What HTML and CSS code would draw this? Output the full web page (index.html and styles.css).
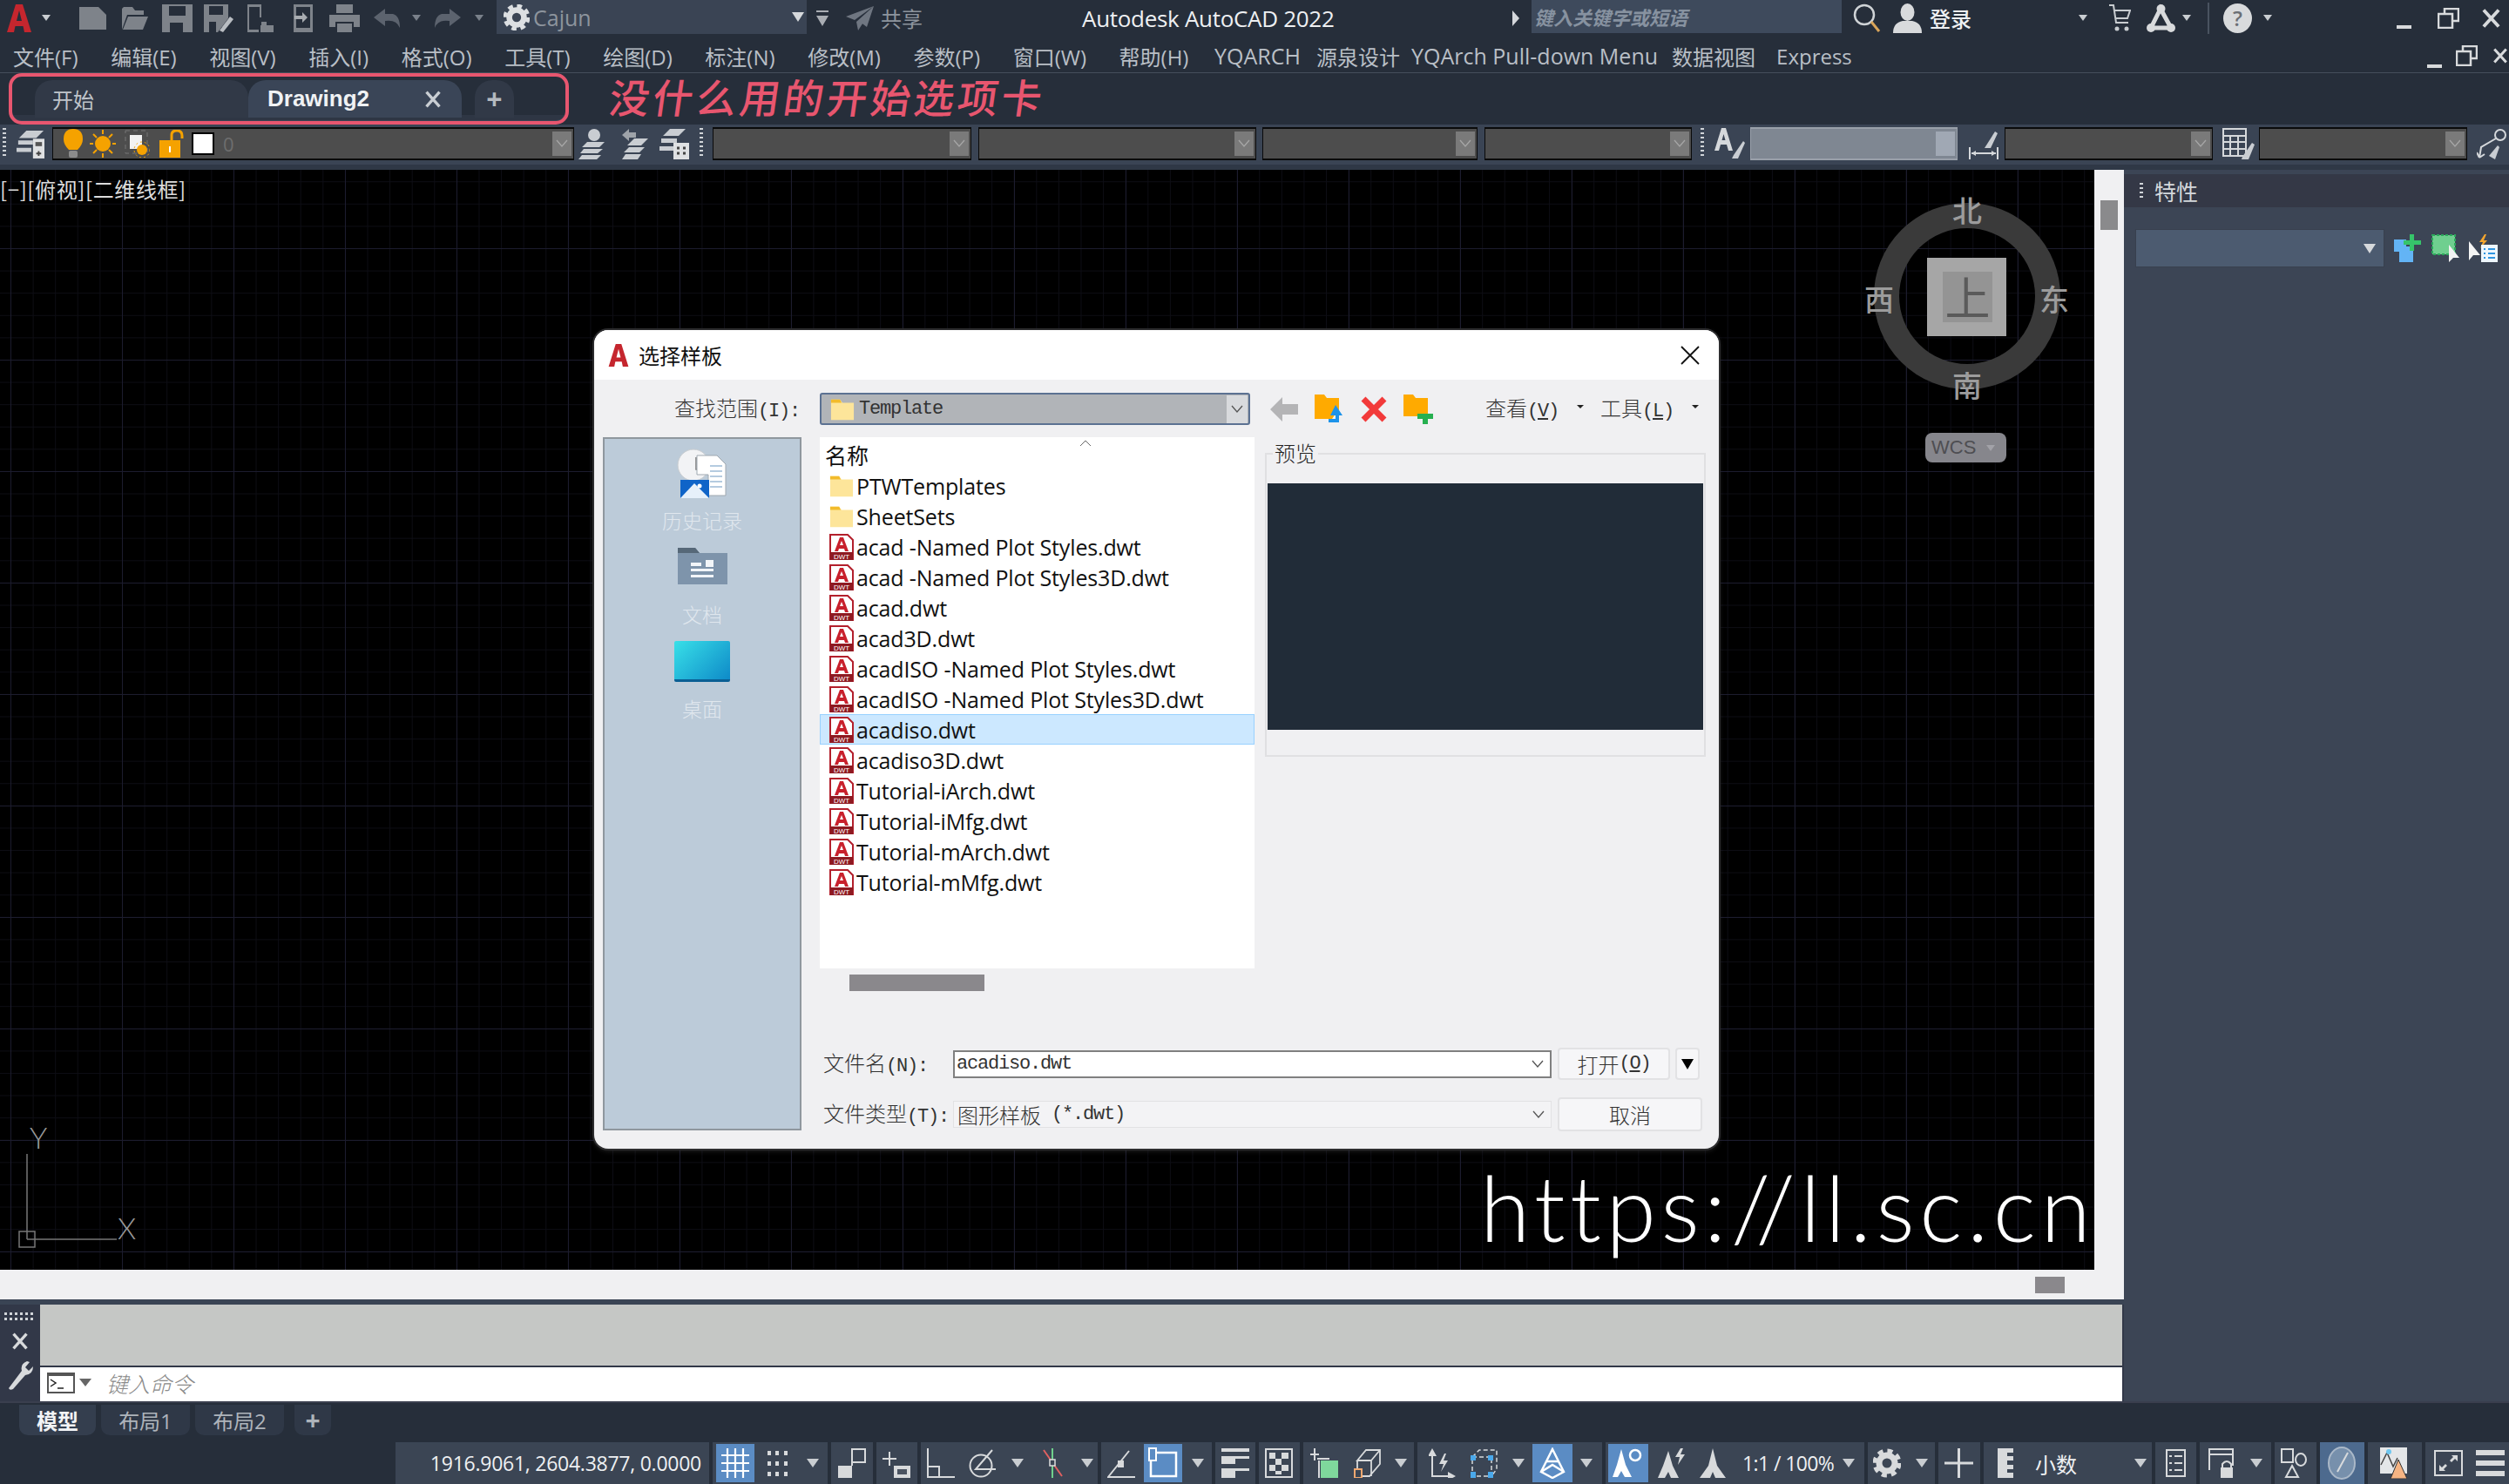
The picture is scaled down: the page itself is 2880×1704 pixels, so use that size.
FILE: index.html
```html
<!DOCTYPE html>
<html lang="zh">
<head>
<meta charset="utf-8">
<title>Autodesk AutoCAD 2022</title>
<link rel="stylesheet" href="styles.css">
</head>
<body>
<svg class="sprite" width="0" height="0">
  <symbol id="dwt" viewBox="0 0 28 30">
    <path d="M1 1H21L27 7V29H1Z" fill="#fff" stroke="#b3202c" stroke-width="2"/>
    <path d="M6 20L12 4H16L22 20H18L17 17H11L10 20ZM12 13H16L14 8Z" fill="#c8202c" fill-rule="evenodd"/>
    <rect x="1" y="21" width="26" height="9" fill="#8e1a22"/>
    <text x="14" y="29" font-size="8" fill="#fff" text-anchor="middle" font-family="Liberation Sans">DWT</text>
  </symbol>
  <symbol id="folder" viewBox="0 0 30 30">
    <path d="M1 3H12L15 7H29V28H1Z" fill="#fde59a"/>
    <path d="M1 3H12L14 7H1Z" fill="#f2bb2b"/>
  </symbol>
  <symbol id="gear" viewBox="0 0 32 32">
    <circle cx="16" cy="16" r="9" fill="none" stroke="currentColor" stroke-width="7"/>
    <circle cx="16" cy="16" r="14" fill="none" stroke="currentColor" stroke-width="5" stroke-dasharray="6 5"/>
  </symbol>
  <symbol id="chev" viewBox="0 0 14 10"><path d="M1 1L7 8L13 1" fill="none" stroke="currentColor" stroke-width="1.3"/></symbol>
  <symbol id="x" viewBox="0 0 24 24"><path d="M3 2L21 22M21 2L3 22" fill="none" stroke="currentColor" stroke-width="4"/></symbol>
</svg>

<div class="app">
  <header class="titlebar">
    <svg class="logo" width="28" height="32" viewBox="0 0 28 32"><path d="M0 32L10 0H18L28 32H20L18.5 25H9.5L8 32ZM11 19H17L14 7Z" fill="#c5262e" fill-rule="evenodd"/></svg>
    <i class="arr arr-s ml12"></i>
    <svg class="qa ml31" width="35" height="26" viewBox="0 0 35 26"><path d="M2 0H24L33 9V26H2Z" fill="#7e838a"/></svg>
    <svg class="qa ml14" width="32" height="26" viewBox="0 0 32 26"><path d="M4 0H14L17 4H27V9H8L2 26V2ZM9 11H32L26 26H3Z" fill="#7e838a"/></svg>
    <svg class="qa ml16" width="35" height="32" viewBox="0 0 35 32"><path d="M0 0H35V32H0ZM8 2V13H27V2ZM9 21V32H24V21Z" fill="#7e838a" fill-rule="evenodd"/></svg>
    <svg class="qa ml13" width="34" height="32" viewBox="0 0 34 32"><path d="M0 0H28V16L16 32H0ZM6 2V12H22V2ZM6 20V32H14V20Z" fill="#7e838a" fill-rule="evenodd"/><path d="M18 30L30 14L34 17L22 32Z" fill="#b9bdc2"/></svg>
    <svg class="qa ml15" width="31" height="32" viewBox="0 0 31 32"><path d="M1 0H17V15H15V3H3V29H14V32H1Z" fill="#7e838a"/><path d="M16 24H31V32H16ZM17 20H23V24H17Z" fill="#7e838a"/></svg>
    <svg class="qa ml22" width="24" height="32" viewBox="0 0 24 32"><path d="M1 0H23V32H1ZM4 3V27H20V3Z" fill="#7e838a" fill-rule="evenodd"/><path d="M2 13H11V9L17 15L11 21V17H2Z" fill="#a8acb1"/></svg>
    <svg class="qa ml18" width="35" height="32" viewBox="0 0 35 32"><path d="M8 0H27V10H8ZM0 12H35V26H28V20H7V26H0ZM9 22H26V32H9Z" fill="#7e838a"/></svg>
    <svg class="qa ml16" width="30" height="22" viewBox="0 0 30 22"><path d="M0 10L13 0V6H22Q30 8 30 22Q26 12 13 14V20Z" fill="#5c636e"/></svg>
    <i class="arr arr-s ml14 dim"></i>
    <svg class="qa ml16" width="30" height="22" viewBox="0 0 30 22"><path d="M30 10L17 0V6H8Q0 8 0 22Q4 12 17 14V20Z" fill="#5c636e"/></svg>
    <i class="arr arr-s ml16 dim"></i>
    <div class="workspace">
      <svg class="gear-ic" width="30" height="30"><use href="#gear"/></svg>
      <span class="ws-name">Cajun</span>
      <i class="arr arr-w"></i>
    </div>
    <svg class="ml10" width="16" height="22" viewBox="0 0 16 22"><path d="M1 2H15V4H1ZM1 8H15L8 20Z" fill="#a9adb3"/></svg>
    <svg class="ml19" width="32" height="28" viewBox="0 0 32 28"><path d="M32 0L0 12L10 16ZM32 0L12 18L14 28ZM32 0L16 18L24 24Z" fill="#6f7681"/></svg>
    <span class="share">共享</span>
    <span class="app-title">Autodesk AutoCAD 2022</span>
    <svg class="tri-r" width="8" height="18" viewBox="0 0 8 18"><path d="M0 0L8 9L0 18Z" fill="#d5d8dc"/></svg>
    <div class="search"><span>键入关键字或短语</span></div>
    <svg class="ml13" width="32" height="34" viewBox="0 0 32 34"><circle cx="13" cy="13" r="11" fill="none" stroke="#cfd3d6" stroke-width="2.5"/><path d="M21 21L30 32" stroke="#d9a55a" stroke-width="3"/></svg>
    <svg class="ml14" width="33" height="34" viewBox="0 0 33 34"><ellipse cx="16.500" cy="10" rx="8" ry="10" fill="#d8dadc"/><path d="M0 34Q0 22 11 20H22Q33 22 33 34Z" fill="#d8dadc"/></svg>
    <span class="login">登录</span>
    <i class="arr arr-s right-a"></i>
    <svg class="ml24" width="26" height="34" viewBox="0 0 26 34"><path d="M1 2H6L9 22H23M7 8H25L22 17H8" fill="none" stroke="#c8ccd0" stroke-width="2"/><circle cx="10" cy="29" r="2.500" fill="#c8ccd0"/><circle cx="21" cy="29" r="2.500" fill="#c8ccd0"/></svg>
    <svg class="ml18" width="33" height="34" viewBox="0 0 33 34"><circle cx="16.500" cy="6" r="5" fill="#d8dadc"/><circle cx="5" cy="28" r="5" fill="#d8dadc"/><circle cx="28" cy="28" r="5" fill="#d8dadc"/><path d="M16 6L5 28H28Z" fill="none" stroke="#d8dadc" stroke-width="5"/></svg>
    <i class="arr arr-s ml8"></i>
    <span class="vsep"></span>
    <span class="help">?</span>
    <i class="arr arr-s ml13"></i>
    <span class="win-min ml143"></span>
    <svg class="ml30" width="25" height="24" viewBox="0 0 25 24"><path d="M8 6V1H24V15H17M1 7H17V23H1Z" fill="none" stroke="#d8dadc" stroke-width="2.500"/></svg>
    <svg class="close-ic ml25" width="23" height="26"><use href="#x"/></svg>
  </header>

  <nav class="menubar">
    <span>文件(F)</span><span>编辑(E)</span><span>视图(V)</span><span>插入(I)</span><span>格式(O)</span><span>工具(T)</span><span>绘图(D)</span><span>标注(N)</span><span>修改(M)</span><span>参数(P)</span><span>窗口(W)</span><span>帮助(H)</span>
    <div class="menu-ext">
      <span class="m-a">YQARCH</span><span class="m-b">源泉设计</span><span class="m-c">YQArch Pull-down Menu</span><span class="m-d">数据视图</span><span class="m-e">Express</span>
    </div>
    <span class="win-min m-ctl"></span>
    <svg class="m-res" width="25" height="24" viewBox="0 0 25 24"><path d="M8 6V1H24V15H17M1 7H17V23H1Z" fill="none" stroke="#d8dadc" stroke-width="2.500"/></svg>
    <svg class="close-ic m-res" width="18" height="24"><use href="#x"/></svg>
  </nav>

  <div class="tabstrip">
    <div class="tabbox">
      <div class="tab tab-start">开始</div>
      <div class="tab tab-active"><span>Drawing2</span><svg class="tab-x" width="20" height="20"><use href="#x"/></svg></div>
      <div class="tab tab-plus">+</div>
    </div>
    <div class="note">没什么用的开始选项卡</div>
  </div>

  <div class="toolbar">
    <i class="grip ml3"></i>
    <svg class="ml12" width="32" height="36" viewBox="0 0 34 36"><path d="M12 2H33L24 11H3ZM2 14H20V19H2ZM0 23H18V28H0Z" fill="#c9cdd2"/><rect x="20" y="12" width="14" height="24" fill="#dfe1e3"/><rect x="23" y="16" width="8" height="5" fill="#555"/><path d="M24 30H30M27 27V33" stroke="#444" stroke-width="2"/></svg>
    <div class="combo c-layer">
      <svg class="ml12" width="22" height="34" viewBox="0 0 22 34"><path d="M11 0Q22 0 22 12Q22 18 16 24H6Q0 18 0 12Q0 0 11 0Z" fill="#f5a200"/><rect x="6" y="25" width="10" height="8" rx="2" fill="#8b8b8b"/></svg>
      <svg class="ml8" width="30" height="32" viewBox="0 0 30 32"><circle cx="15" cy="16" r="9" fill="#f5a200"/><path d="M15 0V5M15 27V32M0 16H4M26 16H30M4 5L8 9M22 23L26 27M26 5L22 9M8 23L4 27" stroke="#f5a200" stroke-width="2"/></svg>
      <svg class="ml10" width="29" height="32" viewBox="0 0 29 32"><rect x="1" y="1" width="25" height="26" fill="none" stroke="#777" stroke-dasharray="5 4"/><rect x="6" y="6" width="14" height="16" fill="#f2f2f2"/><circle cx="20" cy="23" r="6" fill="#f5a200"/><circle cx="20" cy="23" r="9" fill="none" stroke="#f5a200" stroke-dasharray="2 3"/></svg>
      <svg class="ml11" width="28" height="32" viewBox="0 0 28 32"><path d="M14 12V6Q14 1 20 1Q26 1 26 7V10" fill="none" stroke="#f5a200" stroke-width="3"/><rect x="0" y="12" width="24" height="20" fill="#f5a200"/><rect x="11" y="19" width="2" height="7" fill="#fff"/></svg>
      <span class="swatch"></span>
      <span class="layer-zero">0</span>
      <span class="combo-btn"><svg width="14" height="10"><use href="#chev"/></svg></span>
    </div>
    <svg class="ml5" width="35" height="36" viewBox="0 0 35 36"><circle cx="18" cy="8" r="7" fill="#c9cdd2"/><path d="M10 16H30L24 22H4ZM6 24H28L22 29H2ZM4 31H26L21 36H0Z" fill="#c9cdd2"/></svg>
    <svg class="ml15" width="30" height="36" viewBox="0 0 30 36"><path d="M0 8L8 1V5H16V11H8V15Z" fill="#9ea3a9"/><path d="M14 12H30L22 20H6ZM8 22H26L20 28H2ZM4 30H22L18 36H0Z" fill="#c9cdd2"/></svg>
    <svg class="ml13" width="34" height="36" viewBox="0 0 34 36"><path d="M12 1H30L22 9H4ZM2 12H20V17H2ZM0 21H16V26H0Z" fill="#c9cdd2"/><rect x="16" y="17" width="18" height="19" fill="#dfe1e3"/><path d="M20 23H23M27 23H30M20 29H23M27 29H30" stroke="#444" stroke-width="3"/></svg>
    <i class="grip ml12"></i>
    <div class="combo c2"><span class="combo-btn"><svg width="14" height="10"><use href="#chev"/></svg></span></div>
    <div class="combo c3"><span class="combo-btn"><svg width="14" height="10"><use href="#chev"/></svg></span></div>
    <div class="combo c4"><span class="combo-btn"><svg width="14" height="10"><use href="#chev"/></svg></span></div>
    <div class="combo c5"><span class="combo-btn"><svg width="14" height="10"><use href="#chev"/></svg></span></div>
    <i class="grip ml10"></i>
    <svg class="ml12" width="35" height="36" viewBox="0 0 35 36"><path d="M0 26L8 0H13L21 26H16L14 19H7L5 26ZM8.500 14H12.500L10.500 7Z" fill="#d5d8db" fill-rule="evenodd"/><path d="M22 31L33 15L35 17L27 35H20Z" fill="#c9cdd2"/></svg>
    <div class="combo c6"><span class="combo-btn light"></span></div>
    <svg class="ml13" width="35" height="36" viewBox="0 0 35 36"><path d="M1 22V36M33 22V36M3 29H31" stroke="#d5d8db" stroke-width="2" fill="none"/><path d="M3 29L8 26V32ZM31 29L26 26V32Z" fill="#d5d8db"/><path d="M18 23L30 4L33 6L25 23Z" fill="#c9cdd2"/></svg>
    <div class="combo c7 ml6"><span class="combo-btn"><svg width="14" height="10"><use href="#chev"/></svg></span></div>
    <svg class="ml11" width="37" height="36" viewBox="0 0 37 36"><path d="M1 1H27V32H1ZM1 9H27M1 16H27M1 24H27M9 9V32M18 9V32" fill="none" stroke="#d5d8db" stroke-width="2"/><path d="M23 33L34 17L37 19L30 36H22Z" fill="#c9cdd2"/></svg>
    <div class="combo c8 ml5"><span class="combo-btn"><svg width="14" height="10"><use href="#chev"/></svg></span></div>
    <svg class="ml11" width="35" height="36" viewBox="0 0 35 36"><circle cx="27" cy="8" r="6" fill="none" stroke="#d5d8db" stroke-width="2"/><path d="M22 12L5 22L3 34M3 34L0 28M3 34L9 30" fill="none" stroke="#d5d8db" stroke-width="2"/><path d="M14 32L24 20L26 22L21 36Z" fill="#c9cdd2"/></svg>
  </div>

  <div class="main">
    <div class="workarea">
      <div class="viewrow">
        <div class="canvas">
          <div class="viewlabel">[&#8722;][俯视][二维线框]</div>

          <div class="viewcube">
            <div class="vc-ring"></div>
            <span class="vc-dir vc-n">北</span><span class="vc-dir vc-s">南</span><span class="vc-dir vc-w">西</span><span class="vc-dir vc-e">东</span>
            <div class="vc-face"><div class="vc-inner">上</div></div>
            <div class="vc-wcs">WCS<i class="arr arr-s wcs-a"></i></div>
          </div>

          <div class="ucs">
            <svg width="150" height="135" viewBox="0 0 150 135"><path d="M31 24V122M31 122H134M22 113H40V131H22Z" fill="none" stroke="#777" stroke-width="1.500"/></svg>
            <span class="ucs-y">Y</span><span class="ucs-x">X</span>
          </div>

          <div class="watermark">https://ll.sc.cn</div>

          <section class="dialog">
            <div class="dlg-title">
              <svg width="26" height="26" viewBox="0 0 28 32"><path d="M0 32L10 0H18L28 32H20L18.500 25H9.500L8 32ZM11 19H17L14 7Z" fill="#c5262e" fill-rule="evenodd"/></svg>
              <span>选择样板</span>
              <svg class="dlg-close" width="22" height="22" viewBox="0 0 22 22"><path d="M1 1L21 21M21 1L1 21" stroke="#111" stroke-width="1.800"/></svg>
            </div>
            <div class="dlg-body">
              <div class="lookin">
                <label class="dlabel look-label">查找范围<span class="mono">(I):</span></label>
                <div class="look-combo">
                  <svg width="30" height="28"><use href="#folder"/></svg>
                  <span class="mono look-name">Template</span>
                  <span class="look-btn"><svg width="14" height="10"><use href="#chev"/></svg></span>
                </div>
                <svg class="ml23" width="32" height="28" viewBox="0 0 32 28"><path d="M0 14L14 0V8H32V20H14V28Z" fill="#b4b4b6"/></svg>
                <svg class="ml19" width="34" height="34" viewBox="0 0 34 34"><path d="M0 0H11L14 4H28V22H24L20 28H0Z" fill="#ffaa00"/><path d="M24 12L32 24H28V32H16V28H24V24H18Z" fill="#1d93ea"/></svg>
                <svg class="ml19" width="30" height="30" viewBox="0 0 30 30"><path d="M3 3L27 27M27 3L3 27" stroke="#f23a3a" stroke-width="7"/></svg>
                <svg class="ml19" width="34" height="34" viewBox="0 0 34 34"><path d="M0 0H11L14 4H28V25H0Z" fill="#ffaa00"/><path d="M22 22H28V16H28V22H34V28H28V34H22V28H16V22Z" fill="#26b050"/></svg>
                <span class="dlabel view-m">查看<span class="mono">(<u>V</u>)</span></span>
                <i class="arr arr-t m-arr1"></i>
                <span class="dlabel tool-m">工具<span class="mono">(<u>L</u>)</span></span>
                <i class="arr arr-t m-arr2"></i>
              </div>

              <div class="dlg-main">
                <aside class="places">
                  <svg class="pl-hist" width="58" height="58" viewBox="0 0 58 58">
                    <circle cx="19" cy="19" r="18" fill="#f2f3f5" stroke="#c8ccd0"/>
                    <path d="M22 10V24H32" fill="none" stroke="#777" stroke-width="1.500"/>
                    <path d="M23 8H46L56 18V54H36V30H23Z" fill="#fff" stroke="#9fa8b0"/>
                    <path d="M38 20H52M38 26H52M38 32H52M38 38H52M38 44H52" stroke="#9dbbd6" stroke-width="1.500"/>
                    <path d="M4 36H37V57H4Z" fill="#0f64c8"/><path d="M4 57L20 40L37 57Z" fill="#e6f0fa"/><circle cx="26" cy="43" r="2.500" fill="#fff"/>
                  </svg>
                  <span class="pl-label lb1">历史记录</span>
                  <svg class="pl-docs" width="57" height="42" viewBox="0 0 57 42">
                    <path d="M0 0H20L25 6H57V42H0Z" fill="#7e94ab"/><path d="M0 0H20L25 6H0Z" fill="#566878"/><path d="M15 17H27V21H15ZM32 14H41V22H32ZM15 24H41V27H15ZM15 31H41V34H15Z" fill="#f2f5f8"/>
                  </svg>
                  <span class="pl-label lb2">文档</span>
                  <div class="pl-desk"></div>
                  <span class="pl-label lb3">桌面</span>
                </aside>

                <div class="dlg-right">
                  <div class="dlg-top">
                    <div class="listcol">
                      <div class="filelist">
                        <div class="list-head">名称<svg class="sort" width="14" height="8" viewBox="0 0 14 8"><path d="M1 7L7 1L13 7" fill="none" stroke="#666" stroke-width="1"/></svg></div>
                        <div class="frow-i"><svg width="28" height="28"><use href="#folder"/></svg>PTWTemplates</div>
                        <div class="frow-i"><svg width="28" height="28"><use href="#folder"/></svg>SheetSets</div>
                        <div class="frow-i"><svg width="28" height="30"><use href="#dwt"/></svg>acad -Named Plot Styles.dwt</div>
                        <div class="frow-i"><svg width="28" height="30"><use href="#dwt"/></svg>acad -Named Plot Styles3D.dwt</div>
                        <div class="frow-i"><svg width="28" height="30"><use href="#dwt"/></svg>acad.dwt</div>
                        <div class="frow-i"><svg width="28" height="30"><use href="#dwt"/></svg>acad3D.dwt</div>
                        <div class="frow-i"><svg width="28" height="30"><use href="#dwt"/></svg>acadISO -Named Plot Styles.dwt</div>
                        <div class="frow-i"><svg width="28" height="30"><use href="#dwt"/></svg>acadISO -Named Plot Styles3D.dwt</div>
                        <div class="frow-i selected"><svg width="28" height="30"><use href="#dwt"/></svg>acadiso.dwt</div>
                        <div class="frow-i"><svg width="28" height="30"><use href="#dwt"/></svg>acadiso3D.dwt</div>
                        <div class="frow-i"><svg width="28" height="30"><use href="#dwt"/></svg>Tutorial-iArch.dwt</div>
                        <div class="frow-i"><svg width="28" height="30"><use href="#dwt"/></svg>Tutorial-iMfg.dwt</div>
                        <div class="frow-i"><svg width="28" height="30"><use href="#dwt"/></svg>Tutorial-mArch.dwt</div>
                        <div class="frow-i"><svg width="28" height="30"><use href="#dwt"/></svg>Tutorial-mMfg.dwt</div>
                      </div>
                      <div class="list-thumb"></div>
                    </div>
                    <div class="preview">
                      <span class="pv-legend">预览</span>
                      <div class="pv-screen"></div>
                    </div>
                  </div>

                  <div class="fname">
                    <label class="dlabel f-label">文件名<span class="mono">(N):</span></label>
                    <div class="f-input"><span class="mono">acadiso.dwt</span><svg width="14" height="10"><use href="#chev"/></svg></div>
                    <button class="btn btn-open">打开<span class="mono">(<u>O</u>)</span></button>
                    <button class="btn btn-drop"><i class="arr arr-k"></i></button>
                  </div>
                  <div class="ftype">
                    <label class="dlabel f-label">文件类型<span class="mono">(T):</span></label>
                    <div class="f-select"><span>图形样板</span><span class="mono">&nbsp;(*.dwt)</span><svg width="14" height="10"><use href="#chev"/></svg></div>
                    <button class="btn btn-cancel">取消</button>
                  </div>
                </div>
              </div>
            </div>
          </section>
        </div>
        <div class="vscroll"><div class="vthumb"></div></div>
      </div>
      <div class="hscroll"><div class="hthumb"></div></div>
      <div class="command">
        <div class="cmd-side">
          <i class="grip-h"></i>
          <svg width="20" height="22"><use href="#x"/></svg>
          <svg class="wrench" width="32" height="34" viewBox="0 0 32 34"><path d="M3 32L18 12Q16 4 24 1L27 2L22 8L26 12L31 7Q31 16 22 17L8 33Q4 35 3 32Z" fill="#d8dadc"/></svg>
        </div>
        <div class="cmd-main">
          <div class="cmd-hist"></div>
          <div class="cmd-input">
            <svg width="32" height="24" viewBox="0 0 32 24"><rect width="32" height="24" fill="#555"/><rect x="2" y="4" width="28" height="18" fill="#fff"/><path d="M4 8L10 12L4 16M12 18H19" fill="none" stroke="#222" stroke-width="1.500"/></svg>
            <i class="arr arr-g"></i>
            <span>键入命令</span>
          </div>
        </div>
      </div>
    </div>

    <aside class="props">
      <div class="props-head"><i class="grip grip-p"></i><span>特性</span></div>
      <div class="props-tools">
        <div class="props-combo"><i class="arr arr-w"></i></div>
        <svg class="ml12" width="32" height="32" viewBox="0 0 32 32"><path d="M0 6H14V14H22V32H6V20H0Z" fill="#63b4f5"/><path d="M18 0H23V7H31V12H23V19H18V12H11V7H18Z" fill="#36c46a"/></svg>
        <svg class="ml11" width="32" height="32" viewBox="0 0 32 32"><rect x="1" y="1" width="26" height="22" fill="#6fcf8f" stroke="#2aa85a" stroke-dasharray="3 2" stroke-width="2"/><path d="M20 12V32L25 27L32 27Z" fill="#f2f2f2"/></svg>
        <svg class="ml11" width="33" height="32" viewBox="0 0 33 32"><path d="M18 0L12 9H16L13 16L21 7H17L20 0Z" fill="#f3a52e"/><path d="M0 8V30L5 24L13 24Z" fill="#f4f4f4"/><rect x="14" y="12" width="19" height="20" fill="#eef6fc"/><path d="M17 17H19M22 17H30M17 22H19M22 22H30M17 27H19M22 27H30" stroke="#2f95e0" stroke-width="2"/></svg>
      </div>
    </aside>
  </div>

  <div class="layouts">
    <div class="ltab ltab-model">模型</div>
    <div class="ltab ltab-1">布局1</div>
    <div class="ltab ltab-2">布局2</div>
    <div class="ltab ltab-add">+</div>
  </div>

  <footer class="status">
    <div class="seg s-coord">1916.9061, 2604.3877, 0.0000</div>

    <div class="seg s-b">
      <span class="on"><svg width="34" height="36" viewBox="0 0 34 36"><path d="M8 1V35M17 1V35M26 1V35M1 9H33M1 18H33M1 27H33" stroke="#fff" stroke-width="2.200"/></svg></span>
      <svg class="ml14" width="25" height="34" viewBox="0 0 25 34"><path d="M1 3H5V8H1ZM10 3H14V8H10ZM20 3H24V8H20ZM1 15H5V20H1ZM10 15H14V20H10ZM20 15H24V20H20ZM1 27H5V32H1ZM10 27H14V32H10ZM20 27H24V32H20Z" fill="#d8dadc"/></svg>
      <i class="arr ml21"></i>
    </div>
    <div class="seg s-c"><svg width="32" height="34" viewBox="0 0 32 34"><rect y="20" width="16" height="14" fill="#d8dadc"/><path d="M16 20V1H31V16H16" fill="none" stroke="#d8dadc" stroke-width="2"/></svg></div>
    <div class="seg s-d"><svg width="32" height="34" viewBox="0 0 32 34"><path d="M8 4V20M0 12H16" stroke="#d8dadc" stroke-width="2"/><path d="M13 20H32V34H13Z" fill="#d8dadc"/><rect x="17" y="24" width="11" height="6" fill="#4a5361"/></svg></div>
    <div class="seg s-e">
      <svg width="32" height="34" viewBox="0 0 32 34"><path d="M1 0V33H32M1 21H14V33" fill="none" stroke="#d8dadc" stroke-width="2"/></svg>
      <svg class="ml16" width="32" height="34" viewBox="0 0 32 34"><circle cx="14" cy="20" r="12.500" fill="none" stroke="#d8dadc" stroke-width="2"/><path d="M27 2L8 24H31" fill="none" stroke="#d8dadc" stroke-width="2"/></svg>
      <i class="arr ml17"></i>
      <svg class="ml20" width="26" height="34" viewBox="0 0 26 34"><path d="M13 0V34" stroke="#6fd08c" stroke-width="2"/><path d="M3 2L24 32" stroke="#e06060" stroke-width="2"/><rect x="10" y="13" width="6" height="7" fill="#3b4554" stroke="#ddd" stroke-width="1.500"/></svg>
      <i class="arr ml20"></i>
    </div>
    <div class="seg s-f">
      <svg width="32" height="34" viewBox="0 0 32 34"><path d="M25 3L1 33H32" fill="none" stroke="#d8dadc" stroke-width="2"/><rect x="12" y="14" width="7" height="8" fill="#d8dadc"/></svg>
      <span class="on ml10"><svg width="34" height="36" viewBox="0 0 34 36"><path d="M8 6H32V33H3V16" fill="none" stroke="#fff" stroke-width="2.500"/><rect x="1" y="1" width="8" height="14" fill="#5b8cc4" stroke="#fff" stroke-width="2"/></svg></span>
      <i class="arr ml11"></i>
    </div>
    <div class="seg s-g"><svg width="32" height="34" viewBox="0 0 32 34"><path d="M0 0H32V4H0ZM0 9H16V9H32V12H16V18H0ZM0 23H32V26H16V34H0Z" fill="#d8dadc"/></svg></div>
    <div class="seg s-h"><svg width="32" height="34" viewBox="0 0 32 34"><rect x="1" y="1" width="30" height="32" fill="none" stroke="#d8dadc" stroke-width="2"/><path d="M5 5H12V12H5ZM19 5H27V12H19ZM12 12H19V19H12ZM5 19H12V26H5ZM19 19H27V26H19ZM12 26H19V30H12Z" fill="#d8dadc"/></svg></div>
    <div class="seg s-i">
      <svg width="32" height="34" viewBox="0 0 32 34"><path d="M5 0V14M0 7H10M8 12H22M10 14V34" stroke="#d8dadc" stroke-width="2" fill="none"/><rect x="12" y="14" width="20" height="20" fill="#7fd89c"/></svg>
      <svg class="ml18" width="31" height="34" viewBox="0 0 31 34"><path d="M4 14V32H18L30 18V2H14L4 14H20V32M20 14L30 2" fill="none" stroke="#d8dadc" stroke-width="1.800"/><rect x="1" y="24" width="8" height="10" fill="#3b4554" stroke="#f0a870" stroke-width="2"/></svg>
      <i class="arr ml16"></i>
    </div>
    <div class="seg s-j">
      <svg width="31" height="34" viewBox="0 0 31 34"><path d="M4 6V32H24" fill="none" stroke="#d8dadc" stroke-width="2"/><path d="M4 0L9 9H-1ZM31 32L22 27V37Z" fill="#d8dadc"/><path d="M18 6L12 18H17L14 27L22 14H17L20 6Z" fill="#d8dadc"/></svg>
      <svg class="ml17" width="31" height="34" viewBox="0 0 31 34"><path d="M2 10H24V32H2ZM2 10L10 2H30V24L24 32" fill="none" stroke="#d8dadc" stroke-width="1.500" stroke-dasharray="5 3"/><path d="M0 8H6V14H0ZM20 8H26V14H20ZM0 27H6V34H0ZM20 27H26V34H20Z" fill="#4aa8ea"/></svg>
      <i class="arr ml17"></i>
      <span class="on on-w ml9"><svg width="30" height="36" viewBox="0 0 30 36"><path d="M15 2L22 16L28 28L15 35L2 28L8 16Z" fill="none" stroke="#fff" stroke-width="2.500"/><path d="M8 16H22M2 28L15 20L28 28" fill="none" stroke="#fff" stroke-width="2.500"/></svg></span>
      <i class="arr ml9"></i>
    </div>
    <div class="seg s-k">
      <span class="on on-w"><svg width="36" height="36" viewBox="0 0 36 36"><path d="M10 2L15 20L22 34H14L10 27L6 34H0L5 20Z" fill="#fff"/><circle cx="26" cy="9" r="6" fill="none" stroke="#fff" stroke-width="2.500"/></svg></span>
      <svg class="ml10" width="33" height="34" viewBox="0 0 33 34"><path d="M13 3L18 20L25 34H16L13 27L9 34H1L7 20Z" fill="#d8dadc"/><path d="M27 0L21 10H26L24 19L32 7H27L30 0Z" fill="#d8dadc"/></svg>
      <svg class="ml16" width="30" height="34" viewBox="0 0 30 34"><path d="M15 0L20 20L30 34H18L15 27L12 34H0L10 20Z" fill="#d8dadc"/></svg>
      <span class="scale">1:1 / 100%</span>
      <i class="arr ml9"></i>
    </div>
    <div class="seg s-l"><svg class="gear-s" width="32" height="34"><use href="#gear"/></svg><i class="arr ml17"></i></div>
    <div class="seg s-m"><svg width="33" height="34" viewBox="0 0 33 34"><path d="M16.500 0V34M0 17H33" stroke="#d8dadc" stroke-width="3"/></svg></div>
    <div class="seg s-n">
      <svg width="18" height="34" viewBox="0 0 18 34"><path d="M0 0H18V5H11V9H18V14H11V19H18V24H11V28H18V34H0Z" fill="#d8dadc"/></svg>
      <span class="units">小数</span>
      <i class="arr units-a"></i>
    </div>
    <div class="seg s-o"><svg width="23" height="32" viewBox="0 0 23 32"><rect x="1" y="1" width="21" height="30" fill="none" stroke="#d8dadc" stroke-width="2"/><path d="M4 8H7M10 8H19M4 16H7M10 16H19M4 24H7M10 24H19" stroke="#d8dadc" stroke-width="2"/></svg></div>
    <div class="seg s-p">
      <svg width="30" height="34" viewBox="0 0 30 34"><path d="M1 25V1H28V20M1 7H28" fill="none" stroke="#d8dadc" stroke-width="2"/><rect x="14" y="22" width="14" height="12" fill="#d8dadc"/><path d="M16 22V18Q21 12 26 18V22" fill="none" stroke="#d8dadc" stroke-width="2"/></svg>
      <i class="arr ml18"></i>
    </div>
    <div class="seg s-q"><svg width="30" height="34" viewBox="0 0 30 34"><rect x="1" y="1" width="13" height="15" fill="none" stroke="#d8dadc" stroke-width="2"/><ellipse cx="23" cy="13" rx="6" ry="7" fill="none" stroke="#d8dadc" stroke-width="2"/><path d="M13 20L20 33H6Z" fill="none" stroke="#d8dadc" stroke-width="2"/></svg></div>
    <div class="seg s-r"><svg width="34" height="40" viewBox="0 0 34 40"><ellipse cx="17" cy="20" rx="15" ry="18" fill="#7790ac" stroke="#aab8c8" stroke-width="2"/><path d="M12 30L24 8" stroke="#d8dadc" stroke-width="2"/></svg></div>
    <div class="seg s-s"><svg width="31" height="36" viewBox="0 0 31 36"><rect width="31" height="30" fill="#e4e6e8"/><path d="M1 20L8 6L15 22L20 12" fill="none" stroke="#444" stroke-width="1.500"/><circle cx="10" cy="5" r="3" fill="#6fc7f0"/><path d="M21 14L31 36H12Z" fill="#f6b483" stroke="#333"/></svg></div>
    <div class="seg s-t">
      <svg width="33" height="30" viewBox="0 0 33 30"><rect x="1" y="1" width="31" height="28" fill="none" stroke="#d8dadc" stroke-width="2"/><path d="M20 6H27V13L24 10L20 14L18 12L22 8ZM6 24V17L9 20L13 16L15 18L11 22L13 24Z" fill="#d8dadc"/></svg>
      <svg class="ml15" width="33" height="30" viewBox="0 0 33 30"><path d="M0 0H33V6H0ZM0 12H33V18H0ZM0 24H33V30H0Z" fill="#d8dadc"/></svg>
    </div>
  </footer>
</div>
</body>
</html>
```

FILE: styles.css
```css
* { box-sizing: border-box; }
html, body { margin: 0; padding: 0; background: #262e3a; }
body { font-family: "Open Sans", "Noto Sans CJK SC", sans-serif; color: #c4c9cf; overflow: hidden; }
.sprite { display: none; }
svg { display: block; flex: none; }
i { display: block; flex: none; }
.app { width: 2880px; height: 1704px; display: flex; flex-direction: column; overflow: hidden; background: #262e3a; }

.ml3 { margin-left: 3px; } .ml5 { margin-left: 5px; } .ml6 { margin-left: 6px; } .ml8 { margin-left: 8px; }
.ml9 { margin-left: 9px; } .ml10 { margin-left: 10px; } .ml11 { margin-left: 11px; } .ml12 { margin-left: 12px; }
.ml13 { margin-left: 13px; } .ml14 { margin-left: 14px; } .ml15 { margin-left: 15px; } .ml16 { margin-left: 16px; }
.ml17 { margin-left: 17px; } .ml18 { margin-left: 18px; } .ml19 { margin-left: 19px; } .ml20 { margin-left: 20px; }
.ml21 { margin-left: 21px; } .ml22 { margin-left: 22px; } .ml23 { margin-left: 23px; } .ml24 { margin-left: 24px; }
.ml25 { margin-left: 25px; } .ml30 { margin-left: 30px; } .ml31 { margin-left: 31px; } .ml143 { margin-left: 143px; }

/* triangles */
.arr { width: 0; height: 0; border-style: solid; border-color: #c9cdd1 transparent transparent; border-width: 10px 7px 0; }
.arr-s { border-width: 7px 5px 0; border-top-color: #c9cdd1; }
.arr-s.dim { border-top-color: #79808a; }
.arr-w { border-width: 11px 7px 0; border-top-color: #d6d9dc; }
.arr-t { border-width: 4px 4px 0; border-top-color: #222; }
.arr-k { border-width: 12px 7px 0; border-top-color: #000; }
.arr-g { border-width: 9px 7px 0; border-top-color: #666; }

/* title bar */
.titlebar { height: 41px; display: flex; align-items: center; flex: none; }
.logo { margin-left: 8px; }
.workspace { width: 356px; height: 39px; margin-left: 15px; background: #3a4454; display: flex; align-items: center; align-self: flex-start; padding-left: 8px; color: #dcdfe2; }
.ws-name { margin-left: 4px; font-size: 25px; color: #8d949d; flex: 1; }
.workspace .arr-w { margin-right: 3px; }
.share { margin-left: 8px; font-size: 24px; color: #8d949d; width: 48px; }
.app-title { margin-left: 183px; width: 290px; font-size: 26px; color: #eef0f2; white-space: nowrap; letter-spacing: -0.3px; }
.tri-r { margin-left: 204px; }
.search { width: 356px; height: 38px; margin-left: 14px; background: #3e4a5c; align-self: flex-start; display: flex; align-items: center; padding-left: 3px; font-size: 22px; font-style: italic; font-weight: 700; color: #8792a0; }
.login { margin-left: 9px; font-size: 24px; color: #eef0f2; width: 50px; font-weight: 500; }
.right-a { margin-left: 121px; }
.vsep { width: 2px; height: 36px; background: #4a5360; margin-left: 19px; }
.help { width: 33px; height: 34px; margin-left: 16px; border-radius: 50%; background: #d8dadc; color: #6a6f75; font-size: 24px; text-align: center; line-height: 34px; font-weight: 600; }
.win-min { display: block; width: 17px; height: 4px; background: #d8dadc; align-self: flex-end; margin-bottom: 8px; }
.close-ic { color: #d8dadc; }

/* menu */
.menubar { height: 43px; display: flex; align-items: center; gap: 37.6px; font-size: 24px; color: #b9bfc6; border-bottom: 1px solid #454e5b; flex: none; padding: 4px 0 0 15px; white-space: nowrap; }
.menu-ext { display: flex; align-items: center; margin-left: -8px; width: 752px; flex: none; }
.m-a { width: 117px; font-size: 25px; }
.m-b { width: 109px; }
.m-c { width: 299px; font-size: 25px; }
.m-d { width: 120px; }
.m-ctl { margin-left: 602px; align-self: flex-end; margin-bottom: 5px; }
.m-res { margin-left: -21px; }

/* tabs */
.tabstrip { height: 59px; display: flex; align-items: center; flex: none; }
.tabbox { width: 643px; height: 59px; margin-left: 10px; border: 4px solid #e8566f; border-radius: 15px; display: flex; padding: 4px 0 0 26px; background: linear-gradient(#262e3a 0 44px, #2e3644 44px); box-shadow: inset 0 -1px 0 #3a4454; }
.tab { height: 43px; border-radius: 20px 20px 0 0; display: flex; align-items: center; font-size: 24px; }
.tab-start { width: 245px; background: #313947; padding-left: 20px; color: #bfc4ca; }
.tab-active { width: 245px; background: #3a4557; padding-left: 22px; color: #f0f2f4; font-weight: 700; }
.tab-active span { width: 180px; font-family: "Liberation Sans", sans-serif; font-size: 26px; }
.tab-x { color: #c9ced3; }
.tab-plus { width: 45px; margin-left: 15px; background: #313947; justify-content: center; font-weight: 700; font-size: 32px; color: #b4b9bf; }
.note { margin: 0 0 7px 47px; width: 500px; font-family: "Noto Sans CJK SC", sans-serif; font-size: 46px; font-weight: 500; letter-spacing: 4px; line-height: 54px; color: #e8566f; transform: skewX(-8deg); white-space: nowrap; }

/* toolbar */
.toolbar { height: 52px; display: flex; align-items: flex-start; padding-top: 3px; background: linear-gradient(#3a4454 0 46px, #2f3846 46px); flex: none; }
.toolbar > svg { margin-top: 1px; }
.grip { width: 4px; height: 34px; margin-top: 1px; background: repeating-linear-gradient(#d0d4d8 0 2px, transparent 2px 5px); }
.combo { height: 38px; background: #4d4d4d; border: 2px solid #0a0a0a; border-width: 2px 1px; display: flex; align-items: center; justify-content: flex-end; position: relative; }
.c-layer { width: 599px; margin-left: 9px; justify-content: flex-start; }
.c2 { width: 297px; margin-left: 11px; }
.c3 { width: 319px; margin-left: 8px; }
.c4 { width: 247px; margin-left: 7px; }
.c5 { width: 238px; margin-left: 8px; }
.c6 { width: 238px; margin-left: 6px; background: #7f8792; border-color: #99a0aa; }
.c7 { width: 239px; }
.c8 { width: 239px; }
.combo-btn { width: 22px; height: 28px; margin-right: 2px; background: #7a7a7a; color: #a6a6a6; display: flex; align-items: center; justify-content: center; }
.combo-btn.light { background: #a0a8b4; }
.swatch { width: 26px; height: 26px; margin-left: 9px; background: #fff; border: 2px solid #000; }
.layer-zero { margin-left: 10px; color: #6e6e6e; font-size: 22px; flex: 1; }

/* main */
.main { height: 1414px; display: flex; flex: none; }
.workarea { width: 2438px; display: flex; flex-direction: column; flex: none; }
.viewrow { height: 1263px; display: flex; flex: none; }
.canvas { width: 2404px; height: 1263px; position: relative; overflow: hidden; background-color: #000; background-image:
  linear-gradient(90deg, #1c1c2e 1px, transparent 1px), linear-gradient(#1c1c2e 1px, transparent 1px),
  linear-gradient(90deg, #0d0d14 1px, transparent 1px), linear-gradient(#0d0d14 1px, transparent 1px);
  background-size: 128px 128px, 128px 128px, 25.6px 25.6px, 25.6px 25.6px;
  background-position: 12px 0, 0 90px, 12px 0, 0 90px; }
.vscroll { width: 34px; background: #f0f0f2; padding: 35px 7px 0; }
.vthumb { width: 20px; height: 34px; background: #8a8a8c; }
.hscroll { height: 34px; background: #f0f0f2; padding: 8px 0 0 2336px; flex: none; }
.hthumb { width: 34px; height: 19px; background: #8a888c; }
.viewlabel { position: absolute; left: 0; top: 7px; font-family: "Noto Sans CJK SC", sans-serif; font-size: 24px; letter-spacing: 0.6px; color: #dcdcdc; white-space: nowrap; line-height: 30px; }

/* view cube */
.viewcube { position: absolute; left: 2130px; top: 20px; width: 260px; height: 330px; }
.vc-ring { position: absolute; left: 21px; top: 18px; width: 214px; height: 214px; border: 29px solid #3a3a3a; border-radius: 50%; }
.vc-dir { position: absolute; font-family: "Noto Sans CJK SC", sans-serif; font-size: 34px; font-weight: 500; line-height: 36px; color: #9c9c9c; }
.vc-n { left: 111px; top: 8px; } .vc-s { left: 111px; top: 209px; } .vc-w { left: 10px; top: 110px; } .vc-e { left: 211px; top: 110px; }
.vc-face { position: absolute; left: 82px; top: 81px; width: 91px; height: 90px; background: #a6a6a6; padding: 16px 18px; }
.vc-inner { width: 57px; height: 58px; background: #949494; color: #5a5a5a; font-family: "Noto Sans CJK SC", sans-serif; font-size: 52px; line-height: 56px; text-align: center; }
.vc-wcs { position: absolute; left: 80px; top: 282px; width: 93px; height: 34px; background: #86868c; border-radius: 8px; color: #4e4e52; font-family: "Liberation Sans", sans-serif; font-size: 22px; padding-left: 7px; line-height: 32px; display: flex; align-items: center; }
.wcs-a { margin-left: 12px; border-top-color: #a2a2a8; }

.ucs { position: absolute; left: 0; top: 1106px; width: 170px; height: 135px; }
.ucs-y, .ucs-x { position: absolute; font-family: "Lato", sans-serif; font-weight: 300; font-size: 34px; color: #999; line-height: 34px; }
.ucs-y { left: 34px; top: -12px; }
.ucs-x { left: 135px; top: 92px; }

.watermark { position: absolute; left: 1699px; top: 1128px; font-family: "Lato", sans-serif; font-weight: 300; font-size: 104px; line-height: 125px; color: #fff; letter-spacing: 5.6px; white-space: nowrap; }

/* dialog */
.dialog { position: absolute; left: 682px; top: 184px; width: 1291px; height: 940px; background: #f0f0f2; border-radius: 16px; box-shadow: 0 0 0 2px #2c2c2e, 0 2px 6px rgba(60,60,60,.7); overflow: hidden; color: #222; font-family: "Noto Sans CJK SC", sans-serif; }
.dlg-title { height: 57px; background: #fff; display: flex; align-items: center; padding-left: 15px; font-size: 24px; color: #111; }
.dlg-title span { margin-left: 10px; flex: 1; }
.dlg-close { margin-right: 22px; }
.dlg-body { padding-top: 15px; }
.mono { font-family: "Liberation Mono", monospace; font-size: 22px; letter-spacing: -1.2px; }
.dlabel { font-size: 24px; font-weight: 300; color: #333; white-space: nowrap; }
.lookin { height: 37px; display: flex; align-items: center; }
.lookin > .dlabel { margin-top: -5px; }
.look-label { margin-left: 92px; width: 167px; }
.look-combo { width: 494px; height: 37px; background: #b1b4b8; border: 2px solid #5b7192; border-radius: 3px; display: flex; align-items: center; padding-left: 9px; }
.look-name { margin-left: 4px; flex: 1; color: #333; }
.look-btn { width: 24px; height: 32px; background: #d8dadd; display: flex; align-items: center; justify-content: center; color: #555; margin-right: 1px; }
.view-m { margin-left: 60px; width: 79px; }
.m-arr1 { margin-left: 26px; margin-top: -6px; }
.tool-m { margin-left: 19px; width: 79px; }
.m-arr2 { margin-left: 26px; margin-top: -6px; }

.dlg-main { display: flex; gap: 21px; margin: 14px 0 0 10px; }
.places { width: 228px; height: 796px; background: #bccbd9; border: 2px solid #8f979e; display: flex; flex-direction: column; align-items: center; flex: none; }
.pl-hist { margin-top: 11px; }
.pl-docs { margin-top: 17px; }
.pl-desk { width: 64px; height: 47px; margin-top: 16px; background: linear-gradient(135deg, #38e0e8, #0e8ac8); border-bottom: 3px solid #0a5f94; border-radius: 2px; }
.pl-label { font-size: 23px; line-height: 30px; color: #e0e7ee; font-weight: 300; }
.lb1 { margin-top: 9px; } .lb2 { margin-top: 19px; } .lb3 { margin-top: 15px; }

.dlg-right { width: 1020px; display: flex; flex-direction: column; }
.dlg-top { display: flex; gap: 12px; height: 636px; flex: none; }
.listcol { width: 499px; flex: none; }
.filelist { height: 610px; background: #fff; padding-left: 0; position: relative; }
.list-head { height: 38px; padding-left: 6px; font-size: 25px; line-height: 40px; color: #111; }
.sort { position: absolute; left: 298px; top: 3px; }
.frow-i { height: 35px; display: flex; align-items: center; gap: 3px; padding-left: 11px; font-family: "Open Sans", "Noto Sans CJK SC", sans-serif; font-size: 25px; letter-spacing: -0.15px; color: #111; white-space: nowrap; }
.selected { background: #cce8ff; box-shadow: inset 0 0 0 1px #99d1ff; }
.list-thumb { width: 155px; height: 19px; margin: 7px 0 0 34px; background: #8a888c; }
.preview { width: 506px; height: 349px; margin-top: 18px; border: 2px solid #e0e0e2; position: relative; padding: 33px 1px 0; flex: none; }
.pv-legend { position: absolute; left: 7px; top: -18px; background: #f0f0f2; padding: 0 2px; font-size: 24px; font-weight: 300; line-height: 32px; color: #222; }
.pv-screen { height: 283px; background: #212c38; }

.fname { height: 37px; margin: 65px 0 0 4px; display: flex; align-items: center; }
.ftype { height: 39px; margin-left: 4px; margin-top: 20px; display: flex; align-items: center; }
.f-label { width: 149px; flex: none; margin-top: -5px; }
.f-input { width: 687px; height: 32px; background: #fff; border: 2px solid #808080; display: flex; align-items: center; padding: 0 7px 0 2px; justify-content: space-between; color: #555; }
.f-input .mono { color: #333; }
.f-select { width: 687px; height: 31px; background: #f3f3f5; border: 1px solid #e2e2e4; display: flex; align-items: center; padding: 0 7px 0 4px; font-size: 24px; font-weight: 300; color: #333; }
.f-select svg { margin-left: auto; color: #555; }
.btn { border: 2px solid #e2e2e4; border-radius: 4px; background: #f6f6f8; font-family: "Noto Sans CJK SC", sans-serif; font-size: 24px; font-weight: 300; color: #333; padding: 0; display: flex; align-items: center; justify-content: center; }
.btn-open { width: 129px; height: 37px; margin-left: 7px; }
.btn-drop { width: 28px; height: 37px; margin-left: 6px; }
.btn-cancel { width: 166px; height: 39px; margin-left: 7px; }

/* command */
.command { height: 118px; display: flex; background: #323848; border-top: 6px solid #3a4454; flex: none; }
.cmd-side { width: 46px; display: flex; flex-direction: column; align-items: center; padding-top: 9px; color: #d8dadc; }
.grip-h { width: 36px; height: 9px; background: repeating-linear-gradient(90deg, #d0d4d8 0 3px, transparent 3px 6px) 0 0/100% 3px no-repeat, repeating-linear-gradient(90deg, #d0d4d8 0 3px, transparent 3px 6px) 0 6px/100% 3px no-repeat; margin-bottom: 13px; }
.wrench { margin-top: 11px; }
.cmd-main { width: 2390px; display: flex; flex-direction: column; }
.cmd-hist { height: 70px; background: #c5c7c5; margin-bottom: 2px; }
.cmd-input { height: 40px; background: #fff; display: flex; align-items: center; padding: 0 0 5px 8px; font-size: 25px; font-style: italic; font-weight: 300; color: #8a8a8a; }
.cmd-input .arr-g { margin-left: 5px; }
.cmd-input span { margin-left: 17px; }

/* properties */
.props { width: 442px; background: #3c4555; padding-top: 5px; flex: none; }
.props-head { height: 38px; margin-bottom: 2px; background: #343846; display: flex; align-items: center; padding-left: 18px; font-size: 25px; color: #d4d8dc; }
.grip-p { width: 4px; height: 18px; margin: 0; }
.props-head span { margin-left: 13px; }
.props-tools { display: flex; align-items: center; padding: 24px 0 0 14px; }
.props-combo { width: 284px; height: 42px; background: #4c5b70; display: flex; align-items: center; justify-content: flex-end; padding-right: 9px; box-shadow: 0 0 0 1px #38404e; }

/* layouts */
.layouts { height: 45px; display: flex; padding: 2px 0 0 22px; flex: none; border-top: 2px solid #3a3f4e; }
.ltab { height: 35px; display: flex; align-items: center; justify-content: center; font-size: 24px; border-radius: 0 0 10px 10px; background: #2f3847; color: #aeb4bb; }
.ltab-model { width: 88px; color: #f2f4f6; font-weight: 700; background: #343e4e; }
.ltab-1 { width: 102px; margin-left: 6px; }
.ltab-2 { width: 102px; margin-left: 6px; }
.ltab-add { width: 42px; margin-left: 12px; font-size: 30px; font-weight: 700; }

/* status bar */
.status { height: 50px; display: flex; gap: 4px; padding-left: 454px; flex: none; padding-top: 2px; }
.seg { height: 48px; background: #3b4554; display: flex; align-items: center; flex: none; }
.on { width: 44px; height: 44px; background: #5b8cc4; display: flex; align-items: center; justify-content: center; flex: none; }
.on-w { width: 46px; }
.s-coord { width: 360px; justify-content: flex-end; padding-right: 9px; font-size: 23px; color: #eef0f2; letter-spacing: -0.25px; white-space: nowrap; }
.s-b { width: 132px; padding-left: 4px; }
.s-c { width: 48px; padding-left: 8px; }
.s-d { width: 47px; padding-left: 7px; }
.s-e { width: 203px; padding-left: 7px; }
.s-f { width: 127px; padding-left: 7px; }
.s-g { width: 46px; padding-left: 7px; }
.s-h { width: 47px; padding-left: 7px; }
.s-i { width: 127px; padding-left: 8px; }
.s-j { width: 212px; padding-left: 13px; }
.s-k { width: 297px; padding-left: 3px; }
.s-l { width: 77px; padding-left: 6px; }
.s-m { width: 48px; padding-left: 7px; }
.s-n { width: 193px; padding-left: 16px; }
.s-o { width: 47px; padding-left: 12px; }
.s-p { width: 82px; padding-left: 10px; }
.s-q { width: 48px; padding-left: 7px; }
.s-r { width: 51px; padding-left: 8px; background: #4d6a8e; }
.s-s { width: 62px; padding-left: 14px; }
.s-t { width: 96px; padding-left: 10px; }
.gear-s { color: #d8dadc; }
.scale { margin-left: 19px; width: 106px; font-size: 23px; color: #eef0f2; white-space: nowrap; letter-spacing: -0.6px; }
.units { margin-left: 25px; font-size: 24px; color: #eef0f2; width: 48px; }
.units-a { margin-left: 66px; }
```
